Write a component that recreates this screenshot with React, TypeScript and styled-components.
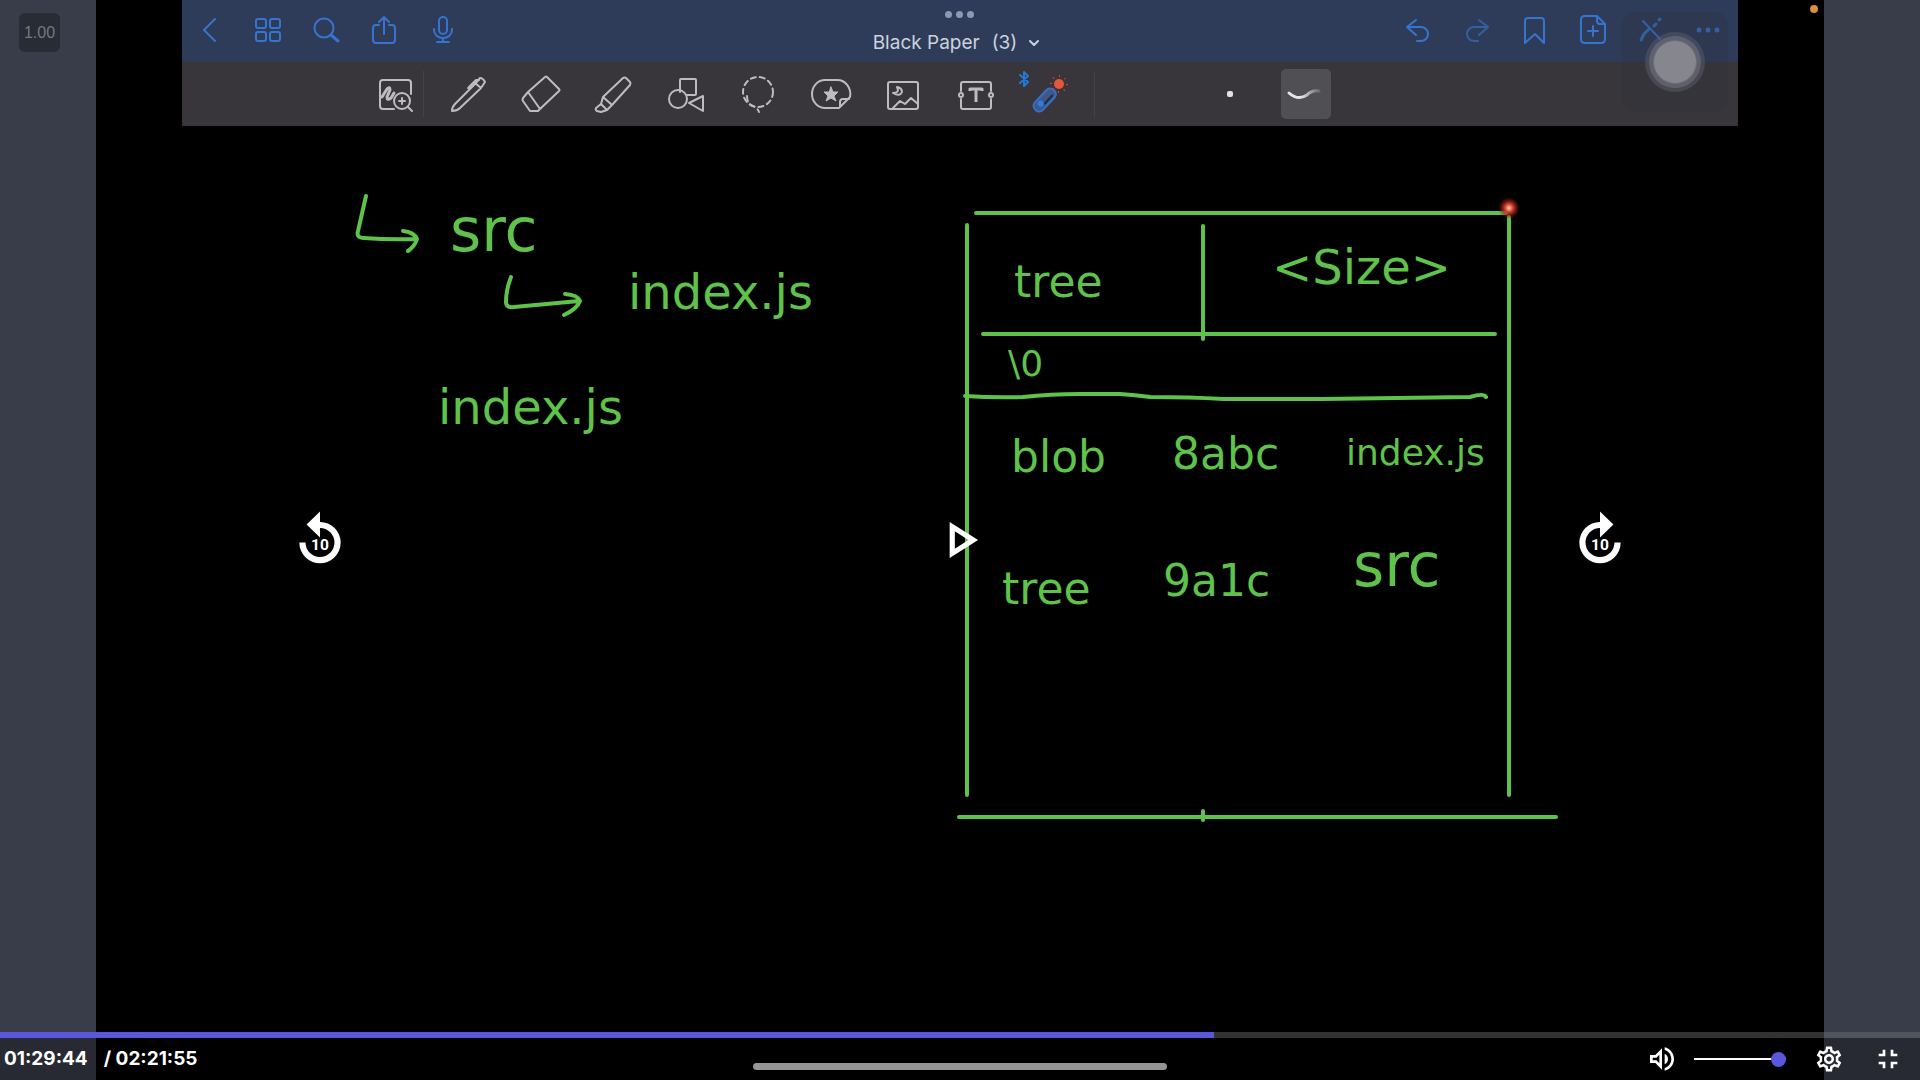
import React, { useState } from "react";
import styled, { createGlobalStyle, css } from "styled-components";
import {
  MdOutlineVolumeUp,
  MdOutlineSettings,
  MdFullscreenExit,
  MdOutlinePlayArrow,
} from "react-icons/md";

const INK = "#5fc24a";
const ACCENT = "#5b57dc";
const ELAPSED = 5384;
const DURATION = 8515;

const GlobalStyle = createGlobalStyle`
  *, *::before, *::after { box-sizing: border-box; }
  body { margin: 0; background: #383d49; }
`;

const Player = styled.main`
  display: grid;
  min-height: 100vh;
  background: #383d49;
  font-family: Inter, "Liberation Sans", sans-serif;
`;

const Video = styled.section`
  grid-area: 1 / 1;
  position: relative;
  display: flex;
  flex-direction: column;
  align-items: center;
  width: 90%;
  margin: 0 auto;
  background: #000;
`;

const RecordingDot = styled.span`
  position: absolute;
  top: 5px;
  right: 6px;
  width: 8px;
  height: 8px;
  border-radius: 50%;
  background: #d98f3c;
`;

const NotesHeader = styled.header`
  position: relative;
  width: 90%;
`;

const NavBar = styled.nav`
  display: grid;
  grid-template-columns: 1fr auto 1fr;
  height: 62px;
  background: #2e3c59;
`;

const NavGroup = styled.div<{ $end?: boolean }>`
  display: flex;
  align-items: center;
  gap: 4px;
  padding-bottom: 2px;
  padding-right: ${(p) => (p.$end ? 2 : 0)}px;
  justify-content: ${(p) => (p.$end ? "flex-end" : "flex-start")};
`;

const bareButton = css`
  display: flex;
  align-items: center;
  justify-content: center;
  padding: 0;
  border: 0;
  background: none;
  color: inherit;
  cursor: pointer;
`;

const NavButton = styled.button<{ $dim?: boolean }>`
  ${bareButton}
  width: 54px;
  height: 60px;
  color: ${(p) => (p.$dim ? "#3160a4" : "#3575d0")};
`;

const TitleBlock = styled.div`
  display: flex;
  flex-direction: column;
  align-items: center;
  gap: 13px;
  padding-top: 11px;
`;

const Dots = styled.div`
  display: flex;
  gap: 4px;
`;

const Dot = styled.span`
  width: 7px;
  height: 7px;
  border-radius: 50%;
  background: #8c99b1;
`;

const TitleButton = styled.button`
  ${bareButton}
  gap: 12px;
  margin-right: 8px;
  color: #ccd2dd;
  font: 400 19px/24px Inter, "Liberation Sans", sans-serif;
`;

const ToolBar = styled.div`
  display: flex;
  align-items: center;
  height: 64px;
  padding-left: 12%;
  background: #38363a;
  color: #bdbcc0;
`;

const ToolButton = styled.button<{ $narrow?: boolean }>`
  ${bareButton}
  flex: none;
  width: ${(p) => (p.$narrow ? 54 : 72)}px;
  height: 60px;
`;

const ToolGroup = styled.div`
  display: flex;
  justify-content: space-between;
  width: 652px;
  margin: 0 10px 0 8px;
`;

const Divider = styled.span`
  width: 1px;
  height: 46px;
  background: #454348;
`;

const StrokeGroup = styled.div`
  display: flex;
  align-items: center;
  gap: 26px;
  margin-left: 110px;
`;

const StrokeButton = styled.button<{ $active?: boolean }>`
  ${bareButton}
  width: 50px;
  height: 50px;
  border-radius: 5px;
  background: ${(p) => (p.$active ? "#504f54" : "none")};
`;

const TouchPad = styled.div`
  position: absolute;
  top: 12px;
  right: 10px;
  display: grid;
  place-items: center;
  width: 106px;
  height: 100px;
  border-radius: 14px;
  background: rgba(48, 50, 58, 0.3);
`;

const TouchKnob = styled.span`
  width: 44px;
  height: 44px;
  border: 1px solid #6a6c77;
  border-radius: 50%;
  background: #85868e;
  box-shadow: 0 0 0 4px rgba(112, 114, 126, 0.6), 0 0 0 8px rgba(100, 102, 114, 0.4);
`;

const Board = styled.svg`
  display: block;
  width: 100%;
  height: auto;
  font-family: "DejaVu Sans", sans-serif;
`;

const HomeIndicator = styled.span`
  width: 24%;
  height: 7px;
  margin: auto 0 10px;
  border-radius: 4px;
  background: #d6d6d6;
`;

const Overlay = styled.section`
  grid-area: 1 / 1;
  z-index: 1;
  display: grid;
  grid-template-rows: 1fr auto 1fr;
  color: #fff;
`;

const TopRow = styled.div`
  padding: 13px 19px;
`;

const SpeedButton = styled.button`
  ${bareButton}
  width: 41px;
  height: 39px;
  border-radius: 6px;
  background: #282c34;
  color: #747981;
  font: 400 16px/20px "Liberation Sans", Arial, sans-serif;
`;

const CenterRow = styled.div`
  display: grid;
  grid-template-columns: repeat(3, 1fr);
  justify-items: center;
`;

const CenterButton = styled.button`
  ${bareButton}
  width: 62px;
  height: 62px;
`;

const BottomBar = styled.footer`
  align-self: end;
  background: rgba(0, 0, 0, 0.3);
`;

const Progress = styled.input<{ $percent: number }>`
  display: block;
  width: 100%;
  height: 6px;
  margin: 0;
  appearance: none;
  cursor: pointer;
  background: linear-gradient(
    to right,
    ${ACCENT} ${(p) => p.$percent}%,
    rgba(255, 255, 255, 0.2) ${(p) => p.$percent}%
  );
  &::-webkit-slider-thumb {
    appearance: none;
    width: 0;
    height: 6px;
  }
`;

const Controls = styled.div`
  display: flex;
  align-items: center;
  justify-content: space-between;
  height: 42px;
  padding: 0 16px 0 4px;
`;

const Times = styled.div`
  display: flex;
  gap: 16px;
  font: 700 19px/20px Inter, "Liberation Sans", sans-serif;
`;

const ControlGroup = styled.div<{ $gap: number }>`
  display: flex;
  align-items: center;
  gap: ${(p) => p.$gap}px;
`;

const ControlButton = styled.button`
  ${bareButton}
`;

const Volume = styled.input`
  width: 92px;
  height: 16px;
  margin: 0;
  appearance: none;
  background: linear-gradient(#fff, #fff) center / 100% 2px no-repeat;
  cursor: pointer;
  &::-webkit-slider-thumb {
    appearance: none;
    width: 15px;
    height: 15px;
    border-radius: 50%;
    background: ${ACCENT};
  }
`;

type IconProps = { size?: number; children: React.ReactNode; width?: number };

/* Line icon on a square grid, drawn around its centre */
const Glyph = ({ size = 40, width = 2, children }: IconProps) => (
  <svg
    width={size}
    height={size}
    viewBox={`0 0 ${size} ${size}`}
    fill="none"
    stroke="currentColor"
    strokeWidth={width}
    strokeLinecap="round"
    strokeLinejoin="round"
    overflow="visible"
    aria-hidden="true"
  >
    {children}
  </svg>
);

const navLeft = [
  { label: "Back", art: <path d="M22 5 11 16l11 11" /> },
  {
    label: "Thumbnails",
    art: (
      <>
        <rect x="5" y="5" width="10" height="9" rx="2" />
        <rect x="19" y="5" width="10" height="9" rx="2" />
        <rect x="5" y="18" width="10" height="9" rx="2" />
        <rect x="19" y="18" width="10" height="9" rx="2" />
      </>
    ),
  },
  {
    label: "Search",
    art: (
      <>
        <circle cx="15" cy="14" r="9.5" />
        <path d="m22 21 7 6" strokeWidth="3" />
      </>
    ),
  },
  {
    label: "Share",
    art: <path d="M12 11H9q-3 0-3 3v12q0 3 3 3h16q3 0 3-3V14q0-3-3-3h-3M17 20V3m-5 5 5-5 5 5" />,
  },
  {
    label: "Record",
    art: (
      <>
        <rect x="14" y="3" width="8" height="17" rx="4" />
        <path d="M9 15v1a9 8 0 0 0 18 0v-1M18 24v4m-6 0h12" />
      </>
    ),
  },
];

const navRight = [
  { label: "Undo", art: <path d="M13 6 4 13l9 8M5 13h13a7 7 0 0 1 0 14h-4" /> },
  { label: "Redo", dim: true, art: <path d="m18 6 9 7-9 8M26 13H13a7 7 0 0 0 0 14h4" /> },
  { label: "Bookmark", art: <path d="M6 29V7q0-3 3-3h13q3 0 3 3v22l-9-9z" /> },
  {
    label: "Add page",
    art: <path d="M20 2H8Q4 2 4 6v19q0 4 4 4h16q4 0 4-4V10zv5q0 3 3 3h5M16 12v10m-5-5h10" />,
  },
  {
    label: "Read only",
    art: (
      <>
        <path d="M8 7 25 25" />
        <path d="m6 26 3-6 5-5M19 12l2-2m3-4 1-1" strokeWidth="3" />
      </>
    ),
  },
  {
    label: "More",
    art: (
      <g fill="currentColor" stroke="none">
        <circle cx="6" cy="16" r="2.500" />
        <circle cx="15" cy="16" r="2.500" />
        <circle cx="24" cy="16" r="2.500" />
      </g>
    ),
  },
];

const tools = [
  {
    label: "Pen",
    art: (
      <path d="M4 37q0-4 3-7L27 10l5-6q3 0 5 4l-4 6L12 34q-3 3-8 3M27 9l6 5M21 13l7-7h3M22 14l-2 0" />
    ),
  },
  { label: "Eraser", art: <path d="M24 3q1-1 2 0l12 12q1 1 0 2L19 35 7 18zM7 18l-5 6q-1 2 0 3l7 10h8l2-2" /> },
  {
    label: "Highlighter",
    art: <path d="m10 23 20-19q2-1 3 0l4 4q1 1 0 3L19 31zM10 23l-2 7 6 6 5-5M8 30l-5 4q-1 2 1 3l4 1 6-2" />,
  },
  {
    label: "Shapes",
    art: (
      <>
        <path d="M14 18V6q0-1 1-1h14q1 0 1 1v14q0 1-1 1h-8" />
        <circle cx="12" cy="25" r="9" />
        <path d="m23 29 14-7v15z" />
      </>
    ),
  },
  {
    label: "Lasso",
    art: (
      <g strokeDasharray="5 4">
        <circle cx="20" cy="18" r="15" />
        <path d="M9 22q0 9 8 11 3 2 4 5" />
      </g>
    ),
  },
  {
    label: "Stickers",
    art: (
      <>
        <path d="M28 34H14A13 14 0 0 1 14 6h12a13 14 0 0 1 13 17L29 33V28q0-3 3-3h6" />
        <path
          d="m20 13 2 5h5l-4 4 2 5-5-3-5 3 2-5-4-4h5z"
          fill="currentColor"
          strokeWidth="1"
        />
      </>
    ),
  },
  {
    label: "Image",
    art: (
      <>
        <rect x="5" y="8" width="30" height="27" rx="2" />
        <path d="M14 13q3 6-4 6 7 4 9-1 0-4-5-5zM10 34l7-7 5 3 6-6 7 6" />
      </>
    ),
  },
  {
    label: "Text",
    art: (
      <>
        <path d="M5 17v-7q0-2 2-2h26q2 0 2 2v7M5 25v8q0 2 2 2h26q2 0 2-2v-8" />
        <circle cx="5" cy="21" r="2" />
        <circle cx="35" cy="21" r="2" />
        <path d="M14 17v-2h12v2M20 15v13" strokeWidth="3" strokeLinecap="butt" />
      </>
    ),
  },
  {
    label: "Laser pointer",
    art: (
      <>
        <path d="m-8 1 8 7-4 4V-2l4 4-8 7" stroke="#2478d8" />
        <g transform="rotate(43 16 26)">
          <rect x="11" y="12" width="11" height="27" rx="5" fill="#40568c" stroke="#3570c8" />
          <path d="M19 17v11" stroke="#262b3c" />
          <circle cx="16" cy="31" r="3" fill="#2e7ce0" stroke="none" />
        </g>
        <circle cx="31" cy="10" r="5" fill="#e4573a" stroke="none" />
        <circle
          cx="31"
          cy="10"
          r="8"
          stroke="#c9482f"
          pathLength="48"
          strokeDasharray="1 5"
          strokeLinecap="butt"
        />
      </>
    ),
  },
];

const notes = [
  { x: 450, y: 251, size: 60, text: "src" },
  { x: 628, y: 309, size: 48, text: "index.js" },
  { x: 438, y: 424, size: 48, text: "index.js" },
  { x: 1014, y: 297, size: 44, text: "tree" },
  { x: 1272, y: 284, size: 48, text: "<Size>" },
  { x: 1008, y: 376, size: 36, text: "\\0" },
  { x: 1011, y: 472, size: 44, text: "blob" },
  { x: 1172, y: 469, size: 44, text: "8abc" },
  { x: 1346, y: 465, size: 36, text: "index.js" },
  { x: 1002, y: 604, size: 44, text: "tree" },
  { x: 1163, y: 596, size: 44, text: "9a1c" },
  { x: 1353, y: 586, size: 60, text: "src" },
];

const Whiteboard = () => (
  <Board viewBox="96 126 1728 900" role="img" aria-label="Tree object notes">
    <defs>
      <radialGradient id="laser">
        <stop offset="0" stopColor="#ffd9d0" />
        <stop offset="0.3" stopColor="#e8513c" />
        <stop offset="0.6" stopColor="#a82a18" stopOpacity="0.7" />
        <stop offset="1" stopColor="#801000" stopOpacity="0" />
      </radialGradient>
    </defs>
    <g fill="none" stroke={INK} strokeWidth="4" strokeLinecap="round" strokeLinejoin="round">
      <path d="M366 196 358 231Q356 238 364 238 390 240 416 239M403 231Q414 232 417 239 415 246 408 251" />
      <path d="M511 277Q506 290 506 302 506 308 514 307L579 301M565 294Q578 295 580 301 577 309 564 315" />
      <path d="M976 213H1506M967 225V795M1509 217V795M1203 226V339M983 334H1495" />
      <path d="M965 396Q995 398 1023 397 1050 394 1080 394H1120Q1135 395 1150 397 1190 397 1223 399H1323Q1400 398 1470 397 1484 393 1486 397" />
      <path d="M959 817H1556M1203 811V820" />
    </g>
    <g fill={INK}>
      {notes.map((n, i) => (
        <text key={i} x={n.x} y={n.y} fontSize={n.size}>
          {n.text}
        </text>
      ))}
    </g>
    <circle cx="1509" cy="208" r="11" fill="url(#laser)" />
  </Board>
);

const SkipButton = ({ forward }: { forward?: boolean }) => (
  <CenterButton aria-label={forward ? "Forward 10 seconds" : "Rewind 10 seconds"}>
    <svg width="62" height="62" viewBox="0 0 24 24" fill="currentColor" aria-hidden="true">
      <path
        transform={forward ? "matrix(-1 0 0 1 24 0)" : undefined}
        d="M12 5V1L6.800 6l5.200 5V7.400a5.600 5.600 0 1 1-5.600 5.600H4a8 8 0 1 0 8-8z"
      />
      <text
        x="12"
        y="16"
        fontSize="6"
        fontWeight="700"
        fontFamily="Roboto, sans-serif"
        textAnchor="middle"
      >
        10
      </text>
    </svg>
  </CenterButton>
);

const Notebook = () => (
  <NotesHeader>
    <NavBar aria-label="Document">
      <NavGroup>
        {navLeft.map((n) => (
          <NavButton key={n.label} aria-label={n.label}>
            <Glyph size={32}>{n.art}</Glyph>
          </NavButton>
        ))}
      </NavGroup>
      <TitleBlock>
        <Dots>
          <Dot />
          <Dot />
          <Dot />
        </Dots>
        <TitleButton>
          <span>Black Paper</span>
          <span>(3)</span>
          <Glyph size={10}>
            <path d="m1 3 4 4 4-4" />
          </Glyph>
        </TitleButton>
      </TitleBlock>
      <NavGroup $end>
        {navRight.map((n) => (
          <NavButton key={n.label} aria-label={n.label} $dim={n.dim}>
            <Glyph size={32}>{n.art}</Glyph>
          </NavButton>
        ))}
      </NavGroup>
    </NavBar>
    <ToolBar role="toolbar" aria-label="Drawing tools">
      <ToolButton $narrow aria-label="Zoom window">
        <Glyph>
          <path d="M18 35H7q-3 0-3-3V9q0-3 3-3h25q3 0 3 3v11" />
          <path d="m6 23 5-8q3-3 3 1l-3 7q0 4 4 1l3-5" strokeWidth="3" />
          <circle cx="26" cy="27" r="8" />
          <path d="m32 33 4 4M26 24v6m-3-3h6" />
        </Glyph>
      </ToolButton>
      <Divider />
      <ToolGroup>
        {tools.map((t) => (
          <ToolButton key={t.label} aria-label={t.label}>
            <Glyph>{t.art}</Glyph>
          </ToolButton>
        ))}
      </ToolGroup>
      <Divider />
      <StrokeGroup>
        <StrokeButton aria-label="Dot pointer">
          <Glyph size={8}>
            <rect x="1" y="1" width="6" height="6" rx="2" fill="#e2e2e2" stroke="none" />
          </Glyph>
        </StrokeButton>
        <StrokeButton $active aria-label="Trail pointer">
          <svg width="50" height="50" viewBox="0 0 50 50" fill="none" aria-hidden="true">
            <defs>
              <linearGradient id="trail">
                <stop offset="0.4" stopColor="#e6e6e6" />
                <stop offset="1" stopColor="#6c6b70" />
              </linearGradient>
            </defs>
            <path
              d="M8 24q9 8 18 2 5-5 12-4"
              stroke="url(#trail)"
              strokeWidth="3"
              strokeLinecap="round"
            />
          </svg>
        </StrokeButton>
      </StrokeGroup>
    </ToolBar>
    <TouchPad>
      <TouchKnob />
    </TouchPad>
  </NotesHeader>
);

const clock = (s: number) =>
  [Math.floor(s / 3600), Math.floor(s / 60) % 60, s % 60]
    .map((n) => String(n).padStart(2, "0"))
    .join(":");

export default function App() {
  const [time, setTime] = useState(ELAPSED);
  const [volume, setVolume] = useState(100);

  return (
    <>
      <GlobalStyle />
      <Player>
        <Video>
          <Notebook />
          <Whiteboard />
          <HomeIndicator />
          <RecordingDot />
        </Video>
        <Overlay>
          <TopRow>
            <SpeedButton aria-label="Playback speed 1.00">1.00</SpeedButton>
          </TopRow>
          <CenterRow>
            <SkipButton />
            <CenterButton aria-label="Play">
              <MdOutlinePlayArrow size={62} />
            </CenterButton>
            <SkipButton forward />
          </CenterRow>
          <BottomBar>
            <Progress
              type="range"
              aria-label="Seek"
              min={0}
              max={DURATION}
              value={time}
              $percent={(time / DURATION) * 100}
              onChange={(e) => setTime(Number(e.target.value))}
            />
            <Controls>
              <Times>
                <span>{clock(time)}</span>
                <span>/ {clock(DURATION)}</span>
              </Times>
              <ControlGroup $gap={28}>
                <ControlGroup $gap={16}>
                  <ControlButton aria-label="Mute">
                    <MdOutlineVolumeUp size={32} />
                  </ControlButton>
                  <Volume
                    type="range"
                    aria-label="Volume"
                    min={0}
                    max={100}
                    value={volume}
                    onChange={(e) => setVolume(Number(e.target.value))}
                  />
                </ControlGroup>
                <ControlButton aria-label="Settings">
                  <MdOutlineSettings size={30} />
                </ControlButton>
                <ControlButton aria-label="Exit full screen">
                  <MdFullscreenExit size={32} />
                </ControlButton>
              </ControlGroup>
            </Controls>
          </BottomBar>
        </Overlay>
      </Player>
    </>
  );
}
